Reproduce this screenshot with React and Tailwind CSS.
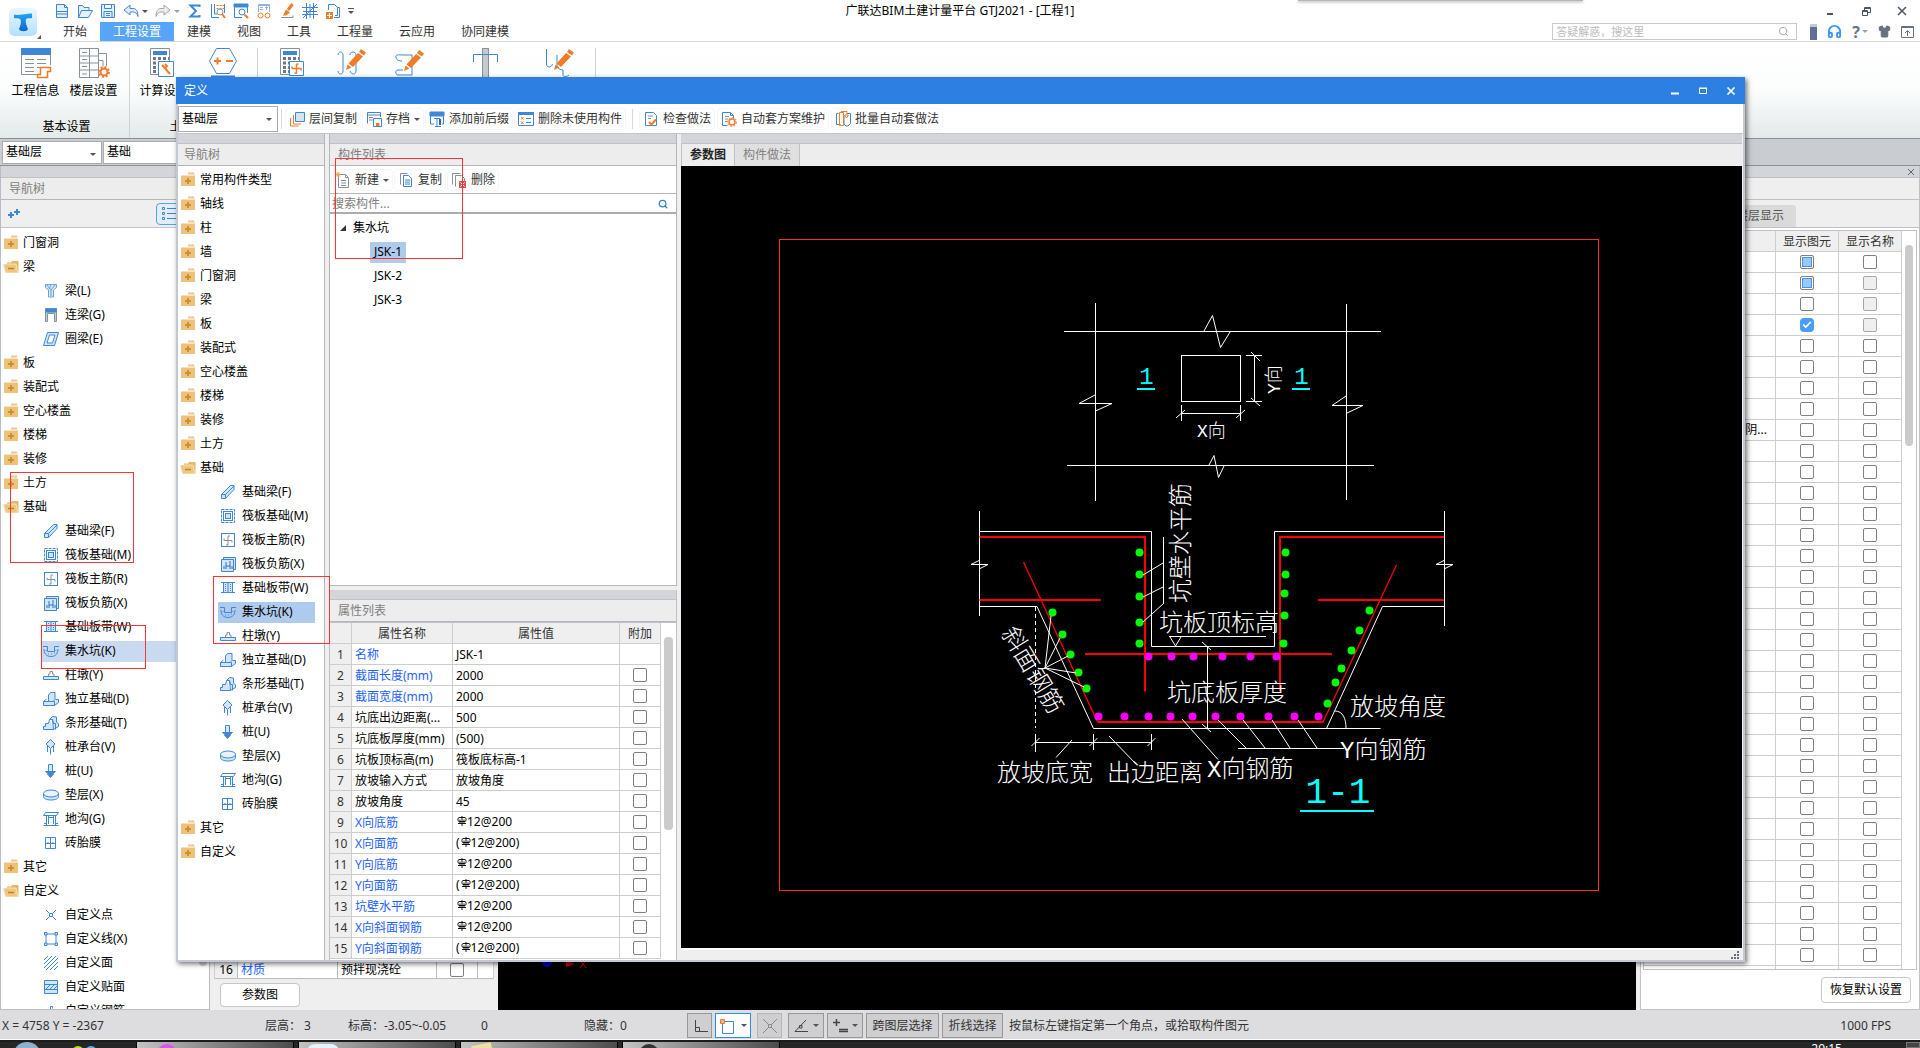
import { Search, Check, Headphones, Shirt } from "lucide-react";

const BLUE = "#3f87d6";
const PALE = "#d3e5f8";
const ORANGE = "#f07c28";
const GREY = "#85929a";

/* ---------- data ---------- */

const foundation = [
  { name: "基础梁(F)", icon: "beamF" },
  { name: "筏板基础(M)", icon: "raft" },
  { name: "筏板主筋(R)", icon: "mainBar" },
  { name: "筏板负筋(X)", icon: "negBar" },
  { name: "基础板带(W)", icon: "strip" },
  { name: "集水坑(K)", icon: "pit", selected: true },
  { name: "柱墩(Y)", icon: "pier" },
  { name: "独立基础(D)", icon: "single" },
  { name: "条形基础(T)", icon: "stripBase" },
  { name: "桩承台(V)", icon: "cap" },
  { name: "桩(U)", icon: "pile" },
  { name: "垫层(X)", icon: "cushion" },
  { name: "地沟(G)", icon: "trench" },
  { name: "砖胎膜", icon: "brick" },
];

const mainTree = [
  { name: "门窗洞" },
  {
    name: "梁",
    children: [
      { name: "梁(L)", icon: "beam" },
      { name: "连梁(G)", icon: "link" },
      { name: "圈梁(E)", icon: "ring" },
    ],
  },
  { name: "板" },
  { name: "装配式" },
  { name: "空心楼盖" },
  { name: "楼梯" },
  { name: "装修" },
  { name: "土方" },
  { name: "基础", children: foundation },
  { name: "其它" },
  {
    name: "自定义",
    children: [
      { name: "自定义点", icon: "point" },
      { name: "自定义线(X)", icon: "line" },
      { name: "自定义面", icon: "face" },
      { name: "自定义贴面", icon: "veneer" },
      { name: "自定义钢筋", icon: "rebar" },
    ],
  },
];

const dialogTree = [
  { name: "常用构件类型" },
  { name: "轴线" },
  { name: "柱" },
  { name: "墙" },
  { name: "门窗洞" },
  { name: "梁" },
  { name: "板" },
  { name: "装配式" },
  { name: "空心楼盖" },
  { name: "楼梯" },
  { name: "装修" },
  { name: "土方" },
  { name: "基础", children: foundation },
  { name: "其它" },
  { name: "自定义" },
];

const properties = [
  { name: "名称", value: "JSK-1", blue: true, noCheck: true },
  { name: "截面长度(mm)", value: "2000", blue: true },
  { name: "截面宽度(mm)", value: "2000", blue: true },
  { name: "坑底出边距离(...", value: "500" },
  { name: "坑底板厚度(mm)", value: "(500)" },
  { name: "坑板顶标高(m)", value: "筏板底标高-1" },
  { name: "放坡输入方式", value: "放坡角度" },
  { name: "放坡角度", value: "45" },
  { name: "X向底筋", bar: "12@200", blue: true },
  { name: "X向面筋", bar: "12@200", paren: true, blue: true },
  { name: "Y向底筋", bar: "12@200", blue: true },
  { name: "Y向面筋", bar: "12@200", paren: true, blue: true },
  { name: "坑壁水平筋", bar: "12@200", blue: true },
  { name: "X向斜面钢筋", bar: "12@200", blue: true },
  { name: "Y向斜面钢筋", bar: "12@200", paren: true, blue: true },
];

const layers = Array.from({ length: 35 }, (_, i) => ({
  label: i === 8 ? "阴..." : "",
  show: i < 2 ? "partial" : i === 3 ? "checked" : "empty",
  disabled: i >= 1 && i <= 3,
}));

/* ---------- icons ---------- */

const treeIcons = {
  beam: (
    <>
      <path d="M2.500 1.500h11v3l-3 2.500v7h-5v-7l-3-2.500z" fill={PALE} stroke="#6ba3e0" />
      <path d="M4 2l4 5M8 2L6 6M12 2L8 7v6" stroke="#6ba3e0" />
    </>
  ),
  link: (
    <>
      <path d="M2.500 1.500v13h2v-8h7v8h2v-13z" stroke={GREY} fill="#c3cbd1" />
      <rect x="3" y="2" width="10" height="3" fill={BLUE} />
    </>
  ),
  ring: <path d="M4.500 1.500h11l-4 13H.5zM6.500 4h5.500l-2.500 8H4z" fill={PALE} fillRule="evenodd" />,
  beamF: <path d="M1.500 10.500l9-9h3.500v4l-8.500 9h-4zM1.500 10.500h4v4M5.500 10.500l8.500-8.500" fill={PALE} />,
  raft: (
    <>
      <rect x="1.500" y="1.500" width="13" height="13" strokeDasharray="3 1" />
      <rect x="3.500" y="3.500" width="9" height="9" />
      <rect x="5.500" y="5.500" width="5" height="5" fill={PALE} />
    </>
  ),
  mainBar: (
    <>
      <rect x="1.500" y="1.500" width="13" height="13" />
      <path d="M8 4v9M4 8.500h8M8 4h2M4 8.500v-2M12 8.500v2M8 13H6" stroke={GREY} />
    </>
  ),
  negBar: (
    <>
      <path d="M1.500 3.500h12v12h-12zM3.500 3V1.500h12v12h-2" fill={PALE} />
      <path d="M6 6v7M10 5v8M6 10h4M4 10v3M12 10v3" stroke="#2a71c4" />
    </>
  ),
  strip: (
    <>
      <path d="M4 3h8v9H4z" fill={PALE} stroke="none" />
      <path d="M1 2.500h14M1 12.500h14M3.500 3v9M8 3v9M12.500 3v9" />
      <path d="M5.500 4v8M10.500 4v8" strokeDasharray="1 1" />
    </>
  ),
  pit: (
    <>
      <path d="M0 3.500h4.500v5h7v-5H16M1 6c0 4 2 7.500 7 7.500s7-3.500 7-7.500" fill="none" />
      <path d="M3 7v1M5 11h1M8 11h1M11 10h1M13 7v1" />
    </>
  ),
  pier: (
    <>
      <path d="M.5 12.500v-3h15v3z" fill={PALE} />
      <path d="M5.500 9V7h1.500V4.500h2.500V7H11v2" stroke={GREY} />
    </>
  ),
  single: (
    <>
      <path d="M.5 10.500h11v4H.5zM11.500 14.500l4-3v-3h-3M.5 10.500l3-2.500" fill={PALE} />
      <path d="M5.500 10.500V4l2-2.500h4.500v7l-2 2z" fill={PALE} />
    </>
  ),
  stripBase: (
    <>
      <path d="M.5 14.500v-3h2v-3h3l1-4h3l1 10zM10.500 14.500l5-3V9l-2-2V2l-4-.5-3 3" fill={PALE} />
      <path d="M9.500 4.500l1 4h2v6" />
    </>
  ),
  cap: (
    <>
      <path d="M7.500 .5l4.500 4.500-4.500 4.500L3 5z" fill={PALE} />
      <path d="M4.500 7v6M7.500 9.500v6M10.500 7v6" />
    </>
  ),
  pile: (
    <>
      <path d="M5.500 1.500h4v7h-4z" fill={PALE} />
      <path d="M2.500 8.500h10l-3 2.500h1l-3 3.500-3-3.500h1z" fill={BLUE} />
    </>
  ),
  cushion: (
    <>
      <path d="M.5 6.500v3c0 2 3 3.500 7.500 3.500s7.500-1.500 7.500-3.500v-3" fill={PALE} />
      <ellipse cx="8" cy="6.500" rx="7.500" ry="3.500" fill="#eaf3fc" />
    </>
  ),
  trench: (
    <>
      <path d="M.5 4.500l2-3h13l-2 3zM.5 14.500h15M3.500 4.500v10M12.500 4.500v10" fill="none" />
      <path d="M5.500 5v8M10.500 5v8M5.500 6.500h5M1 12.500h3M12 12.500h3" />
    </>
  ),
  brick: <path d="M2.500 2.500h10v11h-10zM7.500 2.500v11M2.500 8.500h10M5 7v1M10 7v1" />,
  point: <path d="M3 3l3.500 3.500M13 3L9.500 6.500M3 13l3.500-3.500M13 13L9.500 9.500M6.500 6.500h3v3h-3z" />,
  line: (
    <>
      <path d="M3 3h10v10H3z" />
      <path d="M1.500 1.500h2.500v2.500h-2.500zM12 1.500h2.500v2.500H12zM1.500 12h2.500v2.500h-2.500zM12 12h2.500v2.500H12z" fill={PALE} />
    </>
  ),
  face: <path d="M1 5l4-4M1 9l8-8M1 13l12-12M3 15L15 3M7 15l8-8M11 15l4-4" />,
  veneer: (
    <>
      <path d="M1.500 1.500h13v13h-13zM1.500 5.500h13M1.500 10.500h13" fill={PALE} />
      <path d="M3 10l4-4M7 10l4-4M11 10l3-3" />
    </>
  ),
  rebar: <path d="M1 12.500h3v-4M7.500 14V3.500h2v2M12 9v3.500h3" />,
};

const TreeIcon = ({ name }) => (
  <svg className="h-4 w-4 shrink-0" viewBox="0 0 16 16" fill="none" stroke={BLUE}>
    {treeIcons[name]}
  </svg>
);

const Folder = ({ open }) =>
  open ? (
    <svg className="h-4 w-4 shrink-0" viewBox="0 0 16 16">
      <path d="M4 3.500h4L9 2h6.500v12H4z" fill="#e6b869" />
      <path d="M0 5h13l2 9H2.500z" fill="#f0c77f" stroke="#fff" strokeWidth=".5" />
      <path d="M5 9.500h6" stroke="#b98530" strokeWidth="1.500" />
    </svg>
  ) : (
    <svg className="h-4 w-4 shrink-0" viewBox="0 0 16 16">
      <path d="M8 1l1-.5h5l.5 2H8z" fill="#edc78a" />
      <path d="M1 3.500h14V14H1z" fill="#edc27c" />
      <path d="M8 6v6M5 9h6" stroke="#cb9234" strokeWidth="2" />
    </svg>
  );

const Caret = ({ className = "text-gray-600" }) => (
  <svg className={`h-[3px] w-[6px] shrink-0 ${className}`} viewBox="0 0 6 3">
    <path d="M0 0h6L3 3z" fill="currentColor" />
  </svg>
);

const Pencil = ({ x = 0, y = 0 }) => (
  <g transform={`translate(${x} ${y})`} stroke="none" fill={ORANGE}>
    <path d="M15 0l5 3.500-2 3-5-3.500zM12 4l5 3.500L7 18l-4.500-3.500zM1.500 15.500l4 3L0 21z" />
  </g>
);

const Gear = ({ x, y }) => (
  <g transform={`translate(${x} ${y})`} fill="none" stroke={ORANGE}>
    <circle r="3.500" strokeWidth="2" />
    <circle r="5" strokeWidth="2" strokeDasharray="1.900 2" />
  </g>
);

const ribbonIcons = {
  info: (
    <>
      <path d="M1.500 4v22.500h17M30.500 4v13" stroke={GREY} />
      <rect x="1" y="0" width="30" height="7" fill={BLUE} stroke="none" />
      <path d="M5 11.500h9M17 11.500h9M5 15.500h9M17 15.500h9M5 19.500h9M17 19.500h4M5 23.500h9" stroke={GREY} />
      <path d="M20.500 19.500h10v4h-3v6h-10v-3h3z" stroke={ORANGE} strokeWidth="1.500" fill="#fff" />
    </>
  ),
  floors: (
    <>
      <path d="M1.500.5h19v29h-19zM1.500 8h19M1.500 15h19M1.500 22h19M11.500.5v29M20.500 5.500h8V18" stroke={GREY} />
      <path d="M4 4.500h5M4 11.500h5M4 18.500h5M4 26h5M20 12.500h5v6" stroke={GREY} />
      <Gear x={26} y={24} />
    </>
  ),
  calc: (
    <>
      <path d="M2.500.5h19v26h-19z" stroke={GREY} />
      <rect x="5" y="3" width="14" height="4" fill={BLUE} stroke="none" />
      <path d="M5 10.500h16M5 15h16M5 19.500h16M5 23.500h16" stroke="#6d7880" strokeWidth="3" strokeDasharray="3 2" />
      <path d="M10.500 13.500h15v15h-15z" fill="#fff" stroke={BLUE} />
      <path d="M15 18l7 8M14 17l3 3 2-2-2-2" stroke={ORANGE} strokeWidth="2" />
    </>
  ),
  hex: (
    <>
      <path d="M8.500.5h13l7 12.500-7 12.500h-13L1.500 13z" stroke={BLUE} fill="#fff" />
      <path d="M6 13h7M9.500 9.500v7M18 13h7" stroke={ORANGE} strokeWidth="2" />
      <path d="M3 28.500h24" stroke={BLUE} strokeWidth="2" />
    </>
  ),
  calc2: (
    <>
      <path d="M2.500.5h19v26h-19z" stroke={GREY} />
      <rect x="5" y="3" width="14" height="4" fill={BLUE} stroke="none" />
      <path d="M5 10.500h16M5 15h16M5 19.500h16M5 23.500h16" stroke="#6d7880" strokeWidth="3" strokeDasharray="3 2" />
      <path d="M11.500 13.500h14v14h-14z" fill="#fff" stroke={BLUE} />
      <path d="M18.500 16v9h-2M14 20.500h9v2M14 20.500v-2M18.500 16h2" stroke={ORANGE} strokeWidth="1.500" />
    </>
  ),
  barPen: (
    <>
      <path d="M1 7c0-4 5-4 5 0v16c0 4-5 4-5 0M13 7c0-4 6-4 6 0v16c0 4-5 4-6 0" stroke={BLUE} />
      <Pencil x={9} y={1} />
    </>
  ),
  bendPen: (
    <>
      <path d="M1 9c-1-3 5-2 7-2h9v20H3c-3 0-3-5 0-5h5M1 9c0 3 3 4 6 4" stroke={BLUE} />
      <Pencil x={9} y={2} />
    </>
  ),
  column: (
    <>
      <rect x="12.500" y=".5" width="6" height="30" stroke={GREY} fill="#c3c9cd" />
      <path d="M3.500 14V6.500h24V14" stroke={BLUE} />
    </>
  ),
  hookPen: (
    <>
      <path d="M1.500 1v15c0 4 5 4 6 0M12 7v10c0 3 3 5 6 5v5c0 2 4 2 6 0" stroke={BLUE} />
      <Pencil x={9} y={1} />
    </>
  ),
};

const RibbonIcon = ({ name }) => (
  <svg className="h-8 w-8" viewBox="0 0 32 32" fill="none">
    {ribbonIcons[name]}
  </svg>
);

const toolIcons = {
  file: <path d="M2.500 1.500h8l3 3v10h-11zM10.500 1.500v3h3M3 8.500h10M3 11h10" fill="#e4effb" />,
  folder: <path d="M1.500 14.500v-12h4l1.500 2h5v3M1.500 14.500l3-7h11l-4 7z" fill="#e4effb" />,
  save: <path d="M1.500 1.500h13v13h-13zM4.500 1.500v4h7v-4M4 14V8.500h8V14M6 10.500h4M6 12.500h4" fill="#e4effb" />,
  undo: <path d="M1 7l6-5v3.500h3c3 0 5 2.500 5 8-1-3-2.500-4.500-5-4.500H7V12z" fill="#e4effb" />,
  redo: <path d="M15 7L9 2v3.500H6c-3 0-5 2.500-5 8 1-3 2.500-4.500 5-4.500h3V12z" stroke="#a5a9ad" fill="#eee" />,
  sigma: <path d="M12.500 4V2.500h-9L9 8l-5.500 5.500h9V12" strokeWidth="2" />,
  zoomGrid: (
    <>
      <path d="M1.500 1v13.500H9M14.500 1v9M4.500 1v10H7" />
      <path d="M6.500 2.500h8M6.500 5.500h8" stroke={ORANGE} strokeDasharray="2 1" />
      <circle cx="10" cy="9" r="3" stroke={GREY} fill="#fff" />
      <path d="M12 11l3 4" stroke={ORANGE} strokeWidth="2" />
    </>
  ),
  viewZoom: (
    <>
      <path d="M1 1h14v3H1z" fill={BLUE} />
      <path d="M1.500 4v10.500H9M14.500 4v6" />
      <circle cx="9" cy="9" r="3" fill="#fff" />
      <path d="M11.500 11.500l3.500 3.500" stroke={ORANGE} strokeWidth="2" />
    </>
  ),
  glasses: (
    <>
      <path d="M2.500 9V1.500h11V9M2.500 2.500h11M4 4.500h3M4 6.500h3M9 4.500h3M10.500 3v4" stroke="#8fb5df" />
      <circle cx="4.500" cy="12.500" r="2.500" stroke={ORANGE} />
      <circle cx="11.500" cy="12.500" r="2.500" stroke={ORANGE} />
    </>
  ),
  brush: (
    <>
      <path d="M13.500 1L9 7" stroke={ORANGE} strokeWidth="3" />
      <path d="M7 6.500l4 3-4 3H4z" fill={ORANGE} stroke="none" />
      <path d="M2 14.500h12v-2" stroke={GREY} />
    </>
  ),
  grid: <path d="M4.500 0v16M11.500 0v16M0 4.500h16M0 11.500h16M1 15L15 1M1 8.500h14M8 1v14" />,
  exportAdd: (
    <>
      <path d="M3.500 7V1.500h6l3 3v8H10M12 4.500h2.500v10H9" />
      <rect x="1" y="9" width="7" height="7" fill={ORANGE} stroke="none" />
      <path d="M4.500 10v5M2 12.500h5" stroke="#fff" />
    </>
  ),
  layerCopy: (
    <>
      <path d="M6.500 1.500h9v9h-9z" fill={PALE} />
      <path d="M4.500 4v9H12M1.500 7v8h8" stroke={ORANGE} />
    </>
  ),
  archive: (
    <>
      <path d="M1.500 12.500V1.500h13V6M1.500 4h13" />
      <path d="M3 6.500h4M3 9h4" stroke={GREY} />
      <path d="M7.500 7.500h8v8h-8z" fill="#fff" />
      <path d="M10 12h3.500v3H10z" fill={ORANGE} stroke="none" />
    </>
  ),
  affix: (
    <>
      <path d="M1 1h14v4H1z" fill={BLUE} />
      <path d="M1.500 5v8H5M14.500 5v8H13M5 7.500h6M8 7.500v8M6 15.500h6" />
      <path d="M11 8v6" stroke="#2a63ad" strokeWidth="2" />
    </>
  ),
  removeUnused: (
    <>
      <path d="M.5 1.500h15v13H.5z" />
      <path d="M0 2.500h16" strokeWidth="3" />
      <path d="M3 6l2.500 2.500M5.500 6L3 8.500M3 10.500L5.500 13M5.500 10.500L3 13" stroke={ORANGE} />
      <path d="M8 7.500h5M8 11.500h5" />
    </>
  ),
  check: (
    <>
      <path d="M2.500 1.500h8l3 3v10h-11z" fill="#fff" />
      <path d="M5 5h5M5 7.500h3" stroke={GREY} />
      <path d="M6 11l2.500 2.500L13 8.500" stroke={ORANGE} strokeWidth="2" />
    </>
  ),
  plan: (
    <>
      <path d="M1.500 1.500h8l3 3v3M1.500 1.500v13h5M9.500 1.500v3h3" />
      <path d="M4 5.500h4M4 8h3M4 10.500h2" stroke={GREY} />
      <g transform="translate(11 11)" stroke={ORANGE}>
        <circle r="3" strokeWidth="1.500" />
        <circle r="4.500" strokeDasharray="1.700 1.700" />
      </g>
    </>
  ),
  batch: (
    <>
      <path d="M3.500 2.500h-2v11h4M9 4.500V13l2 2h2l2.500-2.500v-10H12" />
      <path d="M4.500 1.500h4v13h-4zM6 .5h6v3M9.500 4h4l-2 3z" stroke={ORANGE} />
    </>
  ),
  create: (
    <>
      <path d="M3.500 2.500h7l3 3v10h-10zM10.500 2.500v3h3M6 8.500h5M6 11h5M6 13.500h5" stroke={GREY} fill="#fff" />
      <path d="M3 0v5M.5 2.500h5M1 .5l4 4M5 .5l-4 4" stroke="#f2a23c" />
    </>
  ),
  copy: (
    <>
      <path d="M2.500 12.500v-11h7" stroke={GREY} />
      <path d="M5.500 3.500h5l3 3v8h-8zM7 8h5M7 10h5M7 12h5" />
    </>
  ),
  remove: (
    <>
      <path d="M1.500 12.500v-11h8M4.500 14.500v-11h6l3 3v3" stroke={GREY} />
      <rect x="8" y="9" width="7" height="7" fill="#d9534f" stroke="none" />
      <path d="M9.500 10.500l4 4M13.500 10.500l-4 4" stroke="#fff" />
    </>
  ),
  ortho: <path d="M3.500 2v11.500H16M3.500 9.500h4v4" stroke="#444" />,
  rectPick: (
    <>
      <path d="M3.500 3.500h11v12h-11z" />
      <path d="M1.500 1.500h4v4h-4z" fill="#f6b98a" stroke={ORANGE} />
    </>
  ),
  cross: <path d="M1 1l5.500 5.500M15 1L9.500 6.500M1 15l5.500-5.500M15 15L9.500 9.500M6.500 6.500h3v3h-3z" stroke="#8a8a8a" />,
  angle: <path d="M13 2L2 13.500h13M6.500 7.500h2.500v2.500H6.500z" stroke="#444" />,
  plusBox: <path d="M4.500 1v7M1 4.500h7M7 11.500h9M7 13.500h9" stroke="#444" strokeWidth="1.500" />,
};

const ToolIcon = ({ name }) => (
  <svg className="h-4 w-4 shrink-0" viewBox="0 0 16 16" fill="none" stroke={BLUE}>
    {toolIcons[name]}
  </svg>
);

const Rebar = () => (
  <svg className="ml-px inline-block h-[10px] w-[10px] align-baseline" viewBox="0 0 10 10" fill="none" stroke="#000">
    <path d="M5 0v10M2 1.500h6c1.500 0 1.500 4 0 4H2c-1.500 0-1.500-4 0-4zM1 7.500h8M3 3.500v4M7 3.500v4" strokeWidth=".9" />
  </svg>
);

/* ---------- small pieces ---------- */

const Box = ({ state = "empty", disabled, label }) => {
  if (state === "checked") {
    return (
      <span className="mx-auto grid h-[14px] w-[14px]">
        <input
          type="checkbox"
          defaultChecked
          aria-label={label}
          className="col-start-1 row-start-1 h-[14px] w-[14px] appearance-none rounded-sm bg-[#4b9dfa]"
        />
        <Check className="pointer-events-none col-start-1 row-start-1 m-auto h-[10px] w-[10px] text-white" strokeWidth={4} />
      </span>
    );
  }
  return (
    <input
      type="checkbox"
      disabled={disabled}
      aria-label={label}
      className={`mx-auto block h-[14px] w-[14px] appearance-none rounded-xs border ${
        state === "partial"
          ? "border-[#808080] bg-[#9cc7fb] shadow-[inset_0_0_0_1px_#fff,inset_0_0_0_2px_#3f95f5]"
          : disabled
          ? "border-[#a8a8a8] bg-[#efefef]"
          : "border-[#808080] bg-white"
      }`}
    />
  );
};

const Combo = ({ value, label, className }) => (
  <div className={`relative border border-[#a9abb0] bg-white ${className}`}>
    <select aria-label={label} className="h-full w-full appearance-none bg-transparent pl-[3px] pr-4 text-black outline-none">
      <option>{value}</option>
    </select>
    <Caret className="pointer-events-none absolute right-[5px] top-[11px] text-gray-600" />
  </div>
);

const PanelHeader = ({ title, className = "pl-1" }) => (
  <div className={`flex h-[22px] shrink-0 items-center border-b border-[#b5b6b9] bg-[#ededed] text-[#808080] ${className}`}>{title}</div>
);

const ToolButton = ({ icon, text, caret }) => (
  <button className="flex h-[22px] items-center gap-1 whitespace-nowrap rounded-sm border border-[#f6f6f6] px-[3px]">
    <ToolIcon name={icon} />
    {text}
    {caret && <Caret className="text-gray-600" />}
  </button>
);

function Tree({ nodes, selectedClass, className }) {
  return (
    <ul className={`pl-[2px] ${className}`}>
      {nodes.map((node) => (
        <li key={node.name}>
          <div className="flex h-6 items-center gap-1 whitespace-nowrap">
            <Folder open={!!node.children} />
            {node.name}
          </div>
          {node.children && (
            <ul className="pl-[38px]">
              {node.children.map((child) => (
                <li key={child.name} className="flex h-6 items-center whitespace-nowrap">
                  <div className={`flex h-[21px] items-center gap-[6px] pl-[2px] ${child.selected ? selectedClass : ""}`}>
                    <TreeIcon name={child.icon} />
                    {child.name}
                  </div>
                </li>
              ))}
            </ul>
          )}
        </li>
      ))}
    </ul>
  );
}

/* ---------- main window ---------- */

const quickTools = ["sigma", "zoomGrid", "viewZoom", "glasses", "brush", "grid", "exportAdd"];
const menus = ["开始", "工程设置", "建模", "视图", "工具", "工程量", "云应用", "协同建模"];

function TitleBar() {
  return (
    <header className="flex h-[42px] shrink-0 border-b border-[#d4d6d8] bg-white">
      <button aria-label="菜单" className="relative w-[50px] shrink-0">
        <svg className="absolute left-[9px] top-[8px] h-[28px] w-[28px]" viewBox="0 0 28 28">
          <defs>
            <linearGradient id="logo" x1="0" y1="0" x2="0" y2="1">
              <stop offset="0" stopColor="#eaf7fe" />
              <stop offset="1" stopColor="#b4e0fb" />
            </linearGradient>
            <linearGradient id="logoStem" x1="0" y1="0" x2="0" y2="1">
              <stop offset="0" stopColor="#22a7f2" />
              <stop offset="1" stopColor="#0f62d4" />
            </linearGradient>
          </defs>
          <rect width="28" height="28" rx="5" fill="url(#logo)" />
          <path d="M5 6.500c4 1.500 14-1.500 18-1v4.500c-2 .5-5-.5-6 1-.8 3 .5 7 2 10-1 3-8 3-9 0 1.500-3 2.500-7 1.500-9.500-1.500-2-4.500-1-6.500-1.500z" fill="url(#logoStem)" />
        </svg>
        <svg className="absolute bottom-[2px] right-[9px] h-1 w-1" viewBox="0 0 4 4">
          <path d="M4 0v4H0z" fill="#555" />
        </svg>
      </button>
      <div className="flex min-w-0 flex-1 flex-col">
        <div className="-ml-[50px] grid h-[22px] shrink-0 grid-cols-[1fr_auto_1fr] items-center">
          <div className="flex items-center gap-[7px] pl-[54px]">
            <ToolIcon name="file" />
            <ToolIcon name="folder" />
            <ToolIcon name="save" />
            <ToolIcon name="undo" />
            <Caret className="-ml-1 text-gray-600" />
            <ToolIcon name="redo" />
            <Caret className="-ml-1 text-gray-400" />
            {quickTools.map((name) => (
              <ToolIcon key={name} name={name} />
            ))}
            <svg className="h-2 w-[6px]" viewBox="0 0 6 8">
              <path d="M0 1.500h6" stroke="#555" />
              <path d="M0 4h6L3 7z" fill="#555" />
            </svg>
          </div>
          <h1>广联达BIM土建计量平台 GTJ2021 - [工程1]</h1>
          <div className="flex items-center justify-end gap-6 pr-3 text-gray-600">
            <button aria-label="最小化">
              <svg className="h-3 w-3" viewBox="0 0 12 12">
                <path d="M3 9h6" stroke="currentColor" strokeWidth="2" />
              </svg>
            </button>
            <button aria-label="还原">
              <svg className="h-3 w-3" viewBox="0 0 12 12" fill="none" stroke="currentColor">
                <path d="M2.500 5.500h5v5h-5zM2.500 6.500h5M4.500 5V2.500h6v5H8M4.500 3.500h6" />
              </svg>
            </button>
            <button aria-label="关闭">
              <svg className="h-3 w-3" viewBox="0 0 12 12" stroke="currentColor" strokeWidth="1.500">
                <path d="M2 2l8 8M10 2l-8 8" />
              </svg>
            </button>
          </div>
        </div>
        <div className="flex h-[19px] shrink-0 items-center">
          <nav className="flex h-[19px]">
            {menus.map((name) => (
              <button key={name} className={`px-[13px] ${name === "工程设置" ? "bg-[#57a5f8] text-white" : "text-[#333]"}`}>
                {name}
              </button>
            ))}
          </nav>
          <div className="ml-auto flex items-center pr-[6px]">
            <label className="flex h-[17px] w-[245px] items-center border border-[#c9c9c9] pr-[7px]">
              <input
                aria-label="搜索"
                placeholder="答疑解惑，搜这里"
                className="min-w-0 flex-1 px-[3px] text-[11px] leading-4 outline-none placeholder:text-[#bcbcbc]"
              />
              <Search className="h-[11px] w-[11px] text-gray-400" />
            </label>
            <div className="ml-[13px] flex items-center gap-[10px] text-gray-500">
              <svg className="h-4 w-[7px]" viewBox="0 0 7 16">
                <rect width="7" height="16" fill="#5f6f95" />
                <rect width="7" height="3" fill="#c3c9d8" />
              </svg>
              <Headphones className="h-[15px] w-[15px] text-[#3d96f5]" strokeWidth={3} />
              <span className="flex items-center gap-[2px] text-[16px] font-bold leading-4">
                ?<Caret className="text-gray-400" />
              </span>
              <Shirt className="h-[13px] w-[13px]" fill="currentColor" />
              <svg className="h-[13px] w-[13px]" viewBox="0 0 13 13" fill="none" stroke="currentColor">
                <path d="M.5 1.500h12v11H.5zM0 2.500h13M6.500 11V6M4 8l2.500-2.500L9 8" />
              </svg>
            </div>
          </div>
        </div>
      </div>
    </header>
  );
}

const RibbonButton = ({ icon, text, label, className }) => (
  <button aria-label={label} className={`flex shrink-0 flex-col items-center gap-[3px] whitespace-nowrap ${className}`}>
    <RibbonIcon name={icon} />
    {text}
  </button>
);

function Ribbon() {
  return (
    <div className="flex h-24 shrink-0 bg-gradient-to-b from-white via-[#fcfdfd] to-[#e4e9ea] pt-[6px]">
      <section className="flex w-[130px] flex-col items-center border-r border-[#d0d3d5] px-[6px] pb-[3px]">
        <div className="flex flex-1 items-start">
          <RibbonButton icon="info" text="工程信息" className="w-[58px]" />
          <RibbonButton icon="floors" text="楼层设置" className="w-[58px]" />
        </div>
        <p className="pl-1 leading-4">基本设置</p>
      </section>
      <section className="flex w-[128px] flex-col items-center border-r border-[#d0d3d5] px-[3px] pb-[3px]">
        <div className="flex flex-1 items-start">
          <RibbonButton icon="calc" text="计算设置" className="w-[60px]" />
          <RibbonButton icon="hex" label="计算规则" className="w-[60px]" />
        </div>
        <p className="leading-4">土建设置</p>
      </section>
      <section className="flex w-[338px] items-start border-r border-[#d0d3d5] pl-[6px]">
        <RibbonButton icon="calc2" label="钢筋计算设置" className="w-[60px]" />
        <RibbonButton icon="barPen" label="比重设置" className="w-[58px]" />
        <RibbonButton icon="bendPen" label="弯钩设置" className="w-[58px]" />
        <RibbonButton icon="column" label="损耗设置" className="w-[92px]" />
        <RibbonButton icon="hookPen" label="弯曲调整值设置" className="w-[58px]" />
      </section>
    </div>
  );
}

function NavPanel() {
  return (
    <aside className="flex w-[210px] shrink-0 flex-col overflow-hidden border-x border-[#b9bcc2] bg-white">
      <div className="h-3 shrink-0 border-b border-[#bfc1c6] bg-[#d3d5da]" />
      <PanelHeader title="导航树" className="pl-2" />
      <div className="flex h-7 shrink-0 items-center border-b border-[#c3c5ca] bg-[#efefef] pl-[7px]">
        <svg className="h-[10px] w-3" viewBox="0 0 12 10" stroke={BLUE} strokeWidth="2">
          <path d="M0 6h6M3 3v6M6 3h6M9 0v6" />
        </svg>
        <button aria-label="列表" className="ml-[136px] flex h-[22px] w-[26px] items-center justify-center rounded-sm border border-[#57a0ee] bg-[#e3eefb]">
          <svg className="h-4 w-4" viewBox="0 0 16 16" fill="none" stroke={BLUE}>
            <path d="M1.500 1.500h2v2h-2zM1.500 6.500h2v2h-2zM1.500 11.500h2v2h-2zM6 2.500h9M6 7.500h9M6 12.500h9" />
          </svg>
        </button>
      </div>
      <div className="relative min-h-0 flex-1 overflow-hidden border-b border-[#b9bcc2]">
        <Tree nodes={mainTree} className="pt-[3px]" selectedClass="w-[180px] bg-[#c9d9f0]" />
        <div className="absolute bottom-[43px] right-[2px] h-40 w-2 rounded bg-[#cdcdcd]" />
      </div>
    </aside>
  );
}

function BackProperties() {
  const cell = "h-[21px] border-b border-r border-[#bcbcbc] pt-1 leading-4";
  return (
    <section className="flex w-[280px] shrink-0 flex-col justify-end bg-[#efefef]">
      <table className="w-full table-fixed border-separate border-spacing-0 border-x border-[#d0d0d0] bg-white">
        <tbody>
          <tr>
            <td className={`${cell} w-[23px] bg-[#efefef] text-center`}>16</td>
            <td className={`${cell} w-[100px] pl-[3px] text-[#1e62ff]`}>材质</td>
            <td className={`${cell} w-[99px] pl-[3px]`}>预拌现浇砼</td>
            <td className={`${cell} w-[41px]`}>
              <Box label="材质附加" />
            </td>
            <td className="border-b border-[#bcbcbc]" />
          </tr>
        </tbody>
      </table>
      <div className="px-[6px] pb-[3px] pt-1">
        <button className="block h-6 w-20 rounded-sm border border-[#c4c6c9] bg-white">参数图</button>
      </div>
    </section>
  );
}

function LayerPanel() {
  const cell = "h-[21px] border-b border-r border-[#cdcdcd]";
  return (
    <aside className="flex w-[280px] shrink-0 flex-col border-x border-[#bfc1c6] bg-white">
      <div className="flex h-3 shrink-0 items-center justify-end border-b border-[#bfc1c6] bg-[#d3d5da] pr-[5px]">
        <button aria-label="关闭面板">
          <svg className="h-[6px] w-[6px]" viewBox="0 0 6 6" stroke="#666">
            <path d="M0 0l6 6M6 0L0 6" />
          </svg>
        </button>
      </div>
      <div className="h-[22px] shrink-0 border-b border-[#bfc1c6] bg-[#efefef]" />
      <div className="flex h-[28px] shrink-0 items-end border-b border-[#bfc1c6] bg-[#efefef]">
        <button className="h-[22px] w-[77px] text-[#333]">图层显示</button>
        <button className="h-[22px] w-[78px] rounded-t bg-[#dadada] pl-[6px] text-[#555]">楼层显示</button>
      </div>
      <div className="mx-[2px] mt-[2px] flex min-h-0 flex-1 overflow-hidden border border-[#bfc1c6]">
        <div className="flex-1 overflow-hidden">
          <table className="w-full table-fixed border-separate border-spacing-0">
            <thead>
              <tr className="bg-[#efefef] text-[#333]">
                <th className={`${cell} font-normal`} />
                <th className={`${cell} w-[63px] pt-px font-normal`}>显示图元</th>
                <th className={`${cell} w-[63px] pt-px font-normal`}>显示名称</th>
              </tr>
            </thead>
            <tbody>
              {layers.map((layer, i) => (
                <tr key={i}>
                  <td className={`${cell} pr-2 text-right leading-4`}>{layer.label}</td>
                  <td className={cell}>
                    <Box state={layer.show} label={`显示图元 ${i + 1}`} />
                  </td>
                  <td className={cell}>
                    <Box disabled={layer.disabled} label={`显示名称 ${i + 1}`} />
                  </td>
                </tr>
              ))}
            </tbody>
          </table>
        </div>
        <div className="w-[14px] shrink-0 px-[3px] pt-[14px]">
          <div className="h-[201px] rounded bg-[#cbcbcb]" />
        </div>
      </div>
      <div className="flex h-10 shrink-0 items-center justify-end border-b border-[#bfc1c6] pr-2">
        <button className="h-[26px] w-[90px] rounded-sm border border-[#c4c6c9] bg-white">恢复默认设置</button>
      </div>
    </aside>
  );
}

function StatusBar() {
  const btn = "flex h-[25px] items-center justify-center gap-1 border border-[#98989a] bg-[#cfcfd1]";
  return (
    <footer className="flex h-[29px] shrink-0 items-center bg-[#dddddf] pt-[2px] text-[#333]">
      <span className="w-[265px] shrink-0 pl-[2px]">X = 4758 Y = -2367</span>
      <span className="w-[83px] shrink-0">层高： 3</span>
      <span className="w-[133px] shrink-0">标高：-3.05~-0.05</span>
      <span className="w-[103px] shrink-0">0</span>
      <span className="w-[103px] shrink-0">隐藏：0</span>
      <div className="flex shrink-0 items-center gap-[3px]">
        <button aria-label="正交" className={`${btn} w-[25px]`}>
          <ToolIcon name="ortho" />
        </button>
        <button aria-label="矩形选择" className="flex h-[25px] w-[36px] items-center justify-center gap-[6px] border border-[#2b8bf2] bg-white">
          <ToolIcon name="rectPick" />
          <Caret />
        </button>
        <button aria-label="交点" className="ml-[3px] flex h-[25px] w-[25px] items-center justify-center border border-[#b5b5b7] bg-[#cfcfd1]">
          <ToolIcon name="cross" />
        </button>
        <button aria-label="角度" className={`${btn} ml-[3px] w-[36px]`}>
          <ToolIcon name="angle" />
          <Caret />
        </button>
        <button aria-label="偏移" className={`${btn} w-[36px]`}>
          <ToolIcon name="plusBox" />
          <Caret />
        </button>
        <button className={`${btn} w-[73px]`}>跨图层选择</button>
        <button className={`${btn} w-[61px]`}>折线选择</button>
      </div>
      <span className="whitespace-nowrap pl-[6px]">按鼠标左键指定第一个角点，或拾取构件图元</span>
      <span className="ml-auto pr-[29px]">1000 FPS</span>
    </footer>
  );
}

function Taskbar() {
  const item = "w-[158px] border-x border-black bg-gradient-to-r from-[#c4c4c4] to-[#4c4c4c]";
  return (
    <div className="mt-px flex h-2 shrink-0 gap-1 overflow-hidden border-t-2 border-[#1c1c1c] bg-[#262626] text-white">
      <div className="relative w-[132px]">
        <div className="absolute left-[13px] top-0 h-7 w-7 rounded-full bg-[#8fb0cb]" />
        <div className="absolute left-[72px] top-1 h-4 w-3 rounded-full bg-[#bde000]" />
        <div className="absolute left-[85px] top-1 h-4 w-3 rounded-full bg-[#4fb4ee]" />
      </div>
      <div className={item}>
        <div className="ml-5 mt-[2px] h-5 w-5 rounded-full bg-[#dd55ee]" />
      </div>
      <div className={item}>
        <div className="ml-2 mt-[2px] h-5 w-8 rounded-lg bg-[#e6f2fb]" />
      </div>
      <div className={item}>
        <div className="ml-3 mt-[2px] h-5 w-5 -rotate-12 bg-[#f0e0a0]" />
      </div>
      <div className={item}>
        <div className="ml-4 mt-[2px] h-5 w-5 rounded-full bg-[#333]" />
      </div>
      <span className="ml-auto mr-[60px] leading-[14px]">20:15</span>
      <div className="w-[14px] border border-[#777] bg-[#444]" />
    </div>
  );
}

/* ---------- parameter drawing ---------- */

const greenDots = [
  [1139.5, 552.5], [1139.5, 574.5], [1139.5, 596.5], [1139.5, 622.5], [1139.5, 643.5],
  [1285.5, 552.5], [1285.5, 574.5], [1284.5, 593.5], [1284.5, 615.5], [1283.5, 643.5],
  [1052.5, 612.5], [1062.5, 634.5], [1070.5, 654.5], [1078.5, 672.5], [1086.5, 688.5],
  [1369.5, 610.5], [1359.5, 630.5], [1351.5, 650.5], [1341.5, 668.5], [1335.5, 682.5], [1327.5, 703.5],
];
const topDots = [1148.5, 1171.5, 1193.5, 1222.5, 1250.5, 1276.5];
const bottomDots = [1098.5, 1124.5, 1148.5, 1170.5, 1192.5, 1215.5, 1240.5, 1268.5, 1294.5, 1318.5];

function PitDrawing() {
  return (
    <svg
      className="h-full w-full font-['Liberation_Mono','Noto_Sans_CJK_SC',monospace] font-light"
      viewBox="681 166 1061 782"
      fill="none"
    >
      <rect x="779.5" y="239.5" width="819" height="651" stroke="#ff2a2a" />

      {/* plan view */}
      <g stroke="#fff">
        <path d="M1095.500 303v198M1346.500 304v196M1064 331.500h317M1067 465.500h307" />
        <path d="M1204 331l8.500-15.500 8 32 9.500-15.500M1209 465l5-9.500 4.500 22 5.500-11.500" />
        <path d="M1095 395l-16 8.500h33l-16.500 7.500M1346 396l-14 9.500h31l-16 7.500" />
        <rect x="1181.500" y="355.500" width="59" height="46" />
        <path d="M1254.500 355v47M1246 355.500h16M1246 401.500h16M1251 352l9 9M1251 398l9 8" />
        <path d="M1181 413.500h60M1181.500 405v16M1240.500 405v16M1176 418l9-8M1236 418l9-8" />
      </g>
      <g fill="#fff" fontSize="18">
        <text x="1197" y="437">X向</text>
        <text transform="translate(1280 394) rotate(-90)">Y向</text>
      </g>
      <g fill="#00ffff" fontSize="24" textAnchor="middle">
        <text x="1146.500" y="384">1</text>
        <text x="1301.500" y="384">1</text>
      </g>
      <path d="M1137 389h18M1292 389h18" stroke="#00ffff" strokeWidth="2" />

      {/* section 1-1, concrete outline */}
      <g stroke="#fff">
        <path d="M979.500 511v105M1444.500 511v115" />
        <path d="M979 560.500l-8 4h17l-8 4M1444 560.500l-8 4h17l-8 4" />
        <path d="M979.500 531.500h172v115h123v-115h170" />
        <path d="M979.500 606.500h57.500l56.500 122h287M1444.500 606.500h-62l-56 122" />
        <path d="M1035.500 607v121" strokeDasharray="4 3" />
      </g>

      {/* rebar */}
      <g stroke="#ff0000" strokeWidth="2">
        <path d="M979.500 537h165.500v154.500M1444 537h-164v154.500M979.500 600h121.500M1318 600h126M1085 654h247M1097.500 722h226" />
        <path d="M1023.500 562l74 160M1323 722l73.500-157" strokeWidth="1.300" />
      </g>
      <g fill="#00ff00">
        {greenDots.map(([x, y]) => (
          <circle key={`${x}-${y}`} cx={x} cy={y} r="4" />
        ))}
      </g>
      <g fill="#ff00ff">
        {topDots.map((x) => (
          <circle key={x} cx={x} cy="656.500" r="4" />
        ))}
        {bottomDots.map((x) => (
          <circle key={x} cx={x} cy="716.500" r="4" />
        ))}
      </g>

      {/* leaders and dimensions */}
      <g stroke="#fff">
        <path d="M1163.500 537v67M1163 563l-20 12M1163 587l-20 10M1163 604l-20 18" />
        <path d="M1045 668l6-52M1045 668l15-30M1045 668l23-12M1045 668l31 5M1045 668l39 19" />
        <path d="M1169 636.500h97M1170 637l5.500 9 5.500-9" />
        <path d="M1207.500 646v82M1202 642l9 8M1202 724l9 8" />
        <path d="M1035 742.500h117M1035.500 734v18M1093.500 734v16M1151.500 734v16M1031.500 746l8-8M1089.500 746l8-8M1147.500 746l8-8" />
        <path d="M1056 757.500l16-17.500M1109 736l27 28M1182 719l36 40.500" />
        <path d="M1238 748.500h106M1218 720l28 28M1243 720l22 28M1272 720l18 28M1298 720l19 28" />
        <path d="M1335 711c8 0 11 8 11 17" />
      </g>
      <g fill="#fff" fontSize="24">
        <text x="1159" y="631">坑板顶标高</text>
        <text x="1167" y="701">坑底板厚度</text>
        <text x="1350" y="715">放坡角度</text>
        <text x="1340" y="758">Y向钢筋</text>
        <text x="1207" y="777">X向钢筋</text>
        <text x="997" y="781">放坡底宽</text>
        <text x="1107" y="781">出边距离</text>
        <text transform="translate(1189 603) rotate(-90)">坑壁水平筋</text>
        <text transform="translate(1001 633) rotate(59)">斜面钢筋</text>
      </g>
      <text x="1338" y="803" fill="#00ffff" fontSize="36" textAnchor="middle">
        1-1
      </text>
      <path d="M1300 811h74" stroke="#00ffff" strokeWidth="2" />
    </svg>
  );
}

/* ---------- definition dialog ---------- */

function PropertyTable() {
  const cell = "h-[21px] border-b border-r border-[#cdcdcd]";
  return (
    <div className="flex min-h-0 flex-1 overflow-hidden border-t border-[#bfc1c6] bg-white">
      <table className="h-0 flex-1 table-fixed border-separate border-spacing-0">
        <thead>
          <tr className="bg-[#efefef] leading-4 text-[#333]">
            <th className={`${cell} w-[22px] font-normal`} />
            <th className={`${cell} w-[101px] pt-[2px] font-normal`}>属性名称</th>
            <th className={`${cell} pt-[2px] font-normal`}>属性值</th>
            <th className={`${cell} w-[41px] pt-[2px] font-normal`}>附加</th>
          </tr>
        </thead>
        <tbody>
          {properties.map((row, i) => (
            <tr key={row.name}>
              <td className={`${cell} bg-[#efefef] pt-[2px] text-center leading-4 text-[#333]`}>{i + 1}</td>
              <td className={`${cell} whitespace-nowrap pl-[3px] pt-[2px] leading-4 ${row.blue ? "text-[#1e62ff]" : ""}`}>{row.name}</td>
              <td className={`${cell} pl-[3px] leading-4 ${row.bar ? "" : "pt-[2px]"}`}>
                {row.bar ? (
                  <>
                    {row.paren && "("}
                    <Rebar />
                    {row.bar}
                    {row.paren && ")"}
                  </>
                ) : (
                  row.value
                )}
              </td>
              <td className={cell}>{!row.noCheck && <Box label={`${row.name}附加`} />}</td>
            </tr>
          ))}
        </tbody>
      </table>
      <div className="w-[15px] shrink-0 px-[3px] pt-[14px]">
        <div className="h-[193px] rounded bg-[#cbcbcb]" />
      </div>
    </div>
  );
}

function DefinitionDialog() {
  return (
    <div
      role="dialog"
      aria-label="定义"
      className="absolute bottom-[86px] left-[176px] right-[175px] top-[77px] flex flex-col shadow-[2px_2px_5px_rgba(0,0,0,0.55)]"
    >
      <div className="flex h-[27px] shrink-0 items-center justify-between bg-[#2d7fe1] pl-2 pr-2 text-white">
        <span>定义</span>
        <div className="flex gap-4">
          <button aria-label="最小化">
            <svg className="h-3 w-3" viewBox="0 0 12 12">
              <path d="M2 8.500h8" stroke="#fff" strokeWidth="2" />
            </svg>
          </button>
          <button aria-label="最大化">
            <svg className="h-3 w-3" viewBox="0 0 12 12" fill="none" stroke="#fff">
              <path d="M2.500 3.500h7v5h-7zM2 3h8" />
            </svg>
          </button>
          <button aria-label="关闭">
            <svg className="h-3 w-3" viewBox="0 0 12 12" stroke="#fff" strokeWidth="1.700">
              <path d="M2.500 2.500l7 7M9.500 2.500l-7 7" />
            </svg>
          </button>
        </div>
      </div>

      <div className="flex min-h-0 flex-1 flex-col border-x-2 border-b-2 border-[#c3c8d3] bg-[#efefef]">
        <div className="flex h-[30px] shrink-0 items-center gap-px border-b border-[#c3c5cc] bg-white pt-px text-[#333]">
          <Combo value="基础层" label="楼层" className="h-[26px] w-[100px]" />
          <div className="mx-[2px] h-5 w-px bg-[#d8d8d8]" />
          <ToolButton icon="layerCopy" text="层间复制" />
          <ToolButton icon="archive" text="存档" caret />
          <ToolButton icon="affix" text="添加前后缀" />
          <ToolButton icon="removeUnused" text="删除未使用构件" />
          <div className="mx-[5px] h-5 w-px bg-[#d8d8d8]" />
          <div className="flex gap-[2px]">
            <ToolButton icon="check" text="检查做法" />
            <ToolButton icon="plan" text="自动套方案维护" />
            <ToolButton icon="batch" text="批量自动套做法" />
          </div>
        </div>

        <div className="flex min-h-0 flex-1 gap-1">
          <section className="flex w-[147px] shrink-0 flex-col border-r border-[#b5b6b9] bg-white">
            <div className="h-[10px] shrink-0 border-b border-[#bfc1c6] bg-[#d3d5db]" />
            <PanelHeader title="导航树" className="pl-[6px]" />
            <div className="min-h-0 flex-1 overflow-hidden">
              <Tree nodes={dialogTree} className="pt-[2px]" selectedClass="w-[97px] bg-[#aecaec]" />
            </div>
          </section>

          <section className="flex w-[348px] shrink-0 flex-col gap-1">
            <div className="flex min-h-0 flex-1 flex-col border-x border-b border-[#b5b6b9] bg-white">
              <div className="h-[10px] shrink-0 border-b border-[#bfc1c6] bg-[#d3d5db]" />
              <PanelHeader title="构件列表" className="pl-2" />
              <div className="flex h-7 shrink-0 items-center gap-px border-b border-[#b5b6b9] pl-px pt-px text-[#333]">
                <ToolButton icon="create" text="新建" caret />
                <ToolButton icon="copy" text="复制" />
                <ToolButton icon="remove" text="删除" />
              </div>
              <label className="flex h-5 shrink-0 items-center border-b-2 border-[#acacac] pr-2 pt-[2px]">
                <input aria-label="搜索构件" placeholder="搜索构件..." className="min-w-0 flex-1 pl-[2px] leading-4 outline-none placeholder:text-[#808080]" />
                <Search className="h-[10px] w-[10px] text-[#2b8ac6]" strokeWidth={3} />
              </label>
              <ul className="min-h-0 flex-1 pt-0.5">
                <li>
                  <div className="flex h-6 items-center gap-[7px] pl-[10px]">
                    <svg className="h-[6px] w-[6px]" viewBox="0 0 6 6">
                      <path d="M6 0v6H0z" fill="#333" />
                    </svg>
                    集水坑
                  </div>
                  <ul className="pl-10">
                    {["JSK-1", "JSK-2", "JSK-3"].map((name) => (
                      <li key={name} className="flex h-6 items-center">
                        <span className={`flex h-[21px] items-center px-[4px] ${name === "JSK-1" ? "bg-[#aecaec]" : ""}`}>{name}</span>
                      </li>
                    ))}
                  </ul>
                </li>
              </ul>
            </div>
            <div className="flex h-[370px] shrink-0 flex-col border-x border-[#bfc1c6]">
              <div className="h-[10px] shrink-0 border-b border-[#bfc1c6] bg-[#d3d5db]" />
              <PanelHeader title="属性列表" className="pl-2" />
              <PropertyTable />
            </div>
          </section>

          <section className="flex min-w-0 flex-1 flex-col pr-px">
            <div className="h-[10px] shrink-0 border-b border-[#bfc1c6] bg-[#d3d5db]" />
            <div className="flex h-[22px] shrink-0 border-l border-[#bfc1c6] bg-[#ededed]">
              <button className="w-[53px] border-r border-[#bfc1c6] font-bold text-[#222]">参数图</button>
              <button className="w-[65px] border-r border-[#bfc1c6] bg-[#e0e0e0] text-[#808080]">构件做法</button>
            </div>
            <div className="min-h-0 flex-1 bg-black">
              <PitDrawing />
            </div>
            <div className="flex h-3 shrink-0 items-end justify-end border-t-2 border-white pr-[2px]">
              <svg className="h-[9px] w-[9px]" viewBox="0 0 9 9" fill="#66707a">
                <path d="M6 0h2v2H6zM6 3h2v2H6zM6 6h2v2H6zM3 3h2v2H3zM3 6h2v2H3zM0 6h2v2H0z" />
              </svg>
            </div>
          </section>
        </div>
      </div>
    </div>
  );
}

export default function App() {
  return (
    <div className="relative flex h-screen w-full flex-col overflow-hidden bg-[#fdfdfd] font-['Noto_Sans','Noto_Sans_CJK_SC',sans-serif] text-xs text-black">
      <TitleBar />
      <Ribbon />
      <div className="flex h-7 shrink-0 items-center gap-px border-y border-[#8d9195] bg-[#c9ccd1] pl-[2px]">
        <Combo value="基础层" label="当前楼层" className="h-[23px] w-[100px]" />
        <Combo value="基础" label="构件类型" className="h-[23px] w-[100px]" />
      </div>

      <main className="flex min-h-0 flex-1 bg-[#efefef]">
        <NavPanel />
        <div className="w-1 shrink-0" />
        <BackProperties />
        <div className="w-1 shrink-0" />
        <div className="flex min-w-0 flex-1 items-end bg-black">
          <svg className="mb-[41px] ml-10 h-[10px] w-14" viewBox="0 0 56 10">
            <circle cx="9" cy="3" r="5" fill="#0000c8" />
            <path d="M28 1l8 4-8 3z" fill="#c80000" />
            <path d="M42 9l6-8M48 9l-6-8" stroke="#c80000" />
          </svg>
        </div>
        <div className="w-1 shrink-0" />
        <LayerPanel />
      </main>

      <StatusBar />
      <Taskbar />

      <DefinitionDialog />

      {/* edge of a window tucked above the screen */}
      <div className="absolute left-[1298px] top-0 h-px w-[285px] bg-[#b5b5b5] shadow-[0_1px_3px_rgba(0,0,0,0.5)]" />

      {/* review marks */}
      <div className="pointer-events-none absolute left-[10px] top-[472px] h-[91px] w-[124px] border border-[#f33]" />
      <div className="pointer-events-none absolute left-[41px] top-[625px] h-[44px] w-[105px] border border-[#f33]" />
      <div className="pointer-events-none absolute left-[213px] top-[576px] h-[68px] w-[117px] border border-[#f33]" />
      <div className="pointer-events-none absolute left-[335px] top-[158px] h-[101px] w-[128px] border border-[#f33]" />
    </div>
  );
}
